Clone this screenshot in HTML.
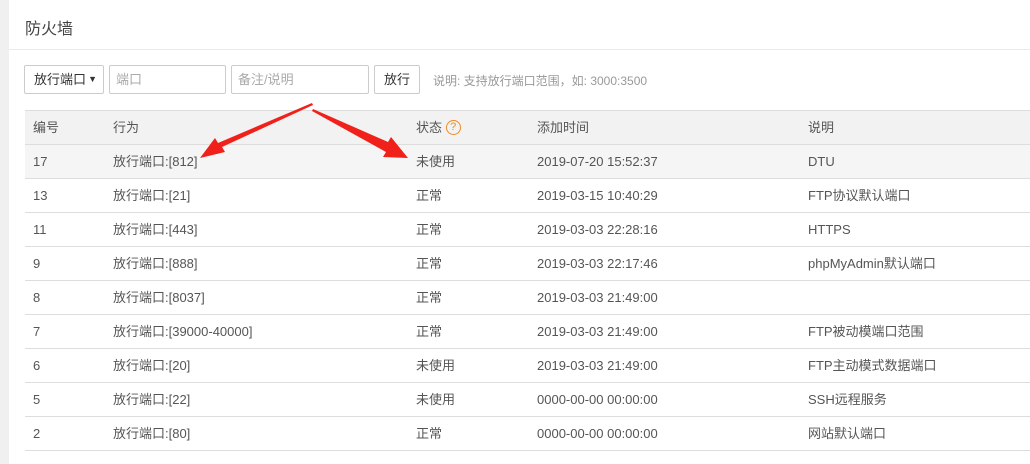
<!DOCTYPE html>
<html><head><meta charset="utf-8"><style>
body{margin:0;width:1030px;height:464px;overflow:hidden;background:#fff;font-family:"Liberation Sans","Noto Sans CJK SC",sans-serif;font-size:12px;color:#555;position:relative}
.strip{position:absolute;left:0;top:0;width:9px;height:464px;background:#f0f0f0}
.title{position:absolute;left:25px;top:15px;font-size:16px;color:#444}
.hl{position:absolute;left:9px;right:0;top:49px;height:1px;background:#eaeaea}
.box{position:absolute;top:65px;height:29px;border:1px solid #ccc;border-radius:2px;box-sizing:border-box;line-height:27px;font-size:13px}
.tbl{position:absolute;left:25px;top:110px;width:1010px;border-collapse:collapse}
.tbl td{vertical-align:baseline;line-height:17px;padding:8px 0 8px 8px;border-top:1px solid #ddd;color:#555;font-size:13px}
.tbl tr.h td{background:#f2f2f2}
.tbl tr.g td{background:#f5f5f5}
.tbl tr:last-child td{border-bottom:1px solid #ddd}
.q{display:inline-block;position:relative;top:1px;width:13px;height:13px;border:1.5px solid #f08a24;border-radius:50%;color:#f08a24;text-align:center;line-height:13px;font-size:11px;vertical-align:top}
</style></head><body>
<div class="strip"></div>
<div class="title">防火墙</div>
<div class="hl"></div>
<div class="box" style="left:24px;width:80px;padding-left:9px;color:#333">放行端口<span style="position:absolute;right:6px;font-size:9px">▼</span></div>
<div class="box" style="left:109px;width:117px;padding-left:6px;color:#aaa">端口</div>
<div class="box" style="left:231px;width:138px;padding-left:6px;color:#aaa">备注/说明</div>
<div class="box" style="left:374px;width:46px;text-align:center;color:#333">放行</div>
<div style="position:absolute;left:433px;top:72px;color:#999">说明: 支持放行端口范围，如: 3000:3500</div>
<table class="tbl">
<col style="width:80px"><col style="width:303px"><col style="width:121px"><col style="width:271px"><col>
<tr class="h"><td>编号</td><td>行为</td><td>状态 <span class="q">?</span></td><td>添加时间</td><td>说明</td></tr>
<tr class="g"><td>17</td><td>放行端口:[812]</td><td>未使用</td><td>2019-07-20 15:52:37</td><td>DTU</td></tr>
<tr><td>13</td><td>放行端口:[21]</td><td>正常</td><td>2019-03-15 10:40:29</td><td>FTP协议默认端口</td></tr>
<tr><td>11</td><td>放行端口:[443]</td><td>正常</td><td>2019-03-03 22:28:16</td><td>HTTPS</td></tr>
<tr><td>9</td><td>放行端口:[888]</td><td>正常</td><td>2019-03-03 22:17:46</td><td>phpMyAdmin默认端口</td></tr>
<tr><td>8</td><td>放行端口:[8037]</td><td>正常</td><td>2019-03-03 21:49:00</td><td>&nbsp;</td></tr>
<tr><td>7</td><td>放行端口:[39000-40000]</td><td>正常</td><td>2019-03-03 21:49:00</td><td>FTP被动模端口范围</td></tr>
<tr><td>6</td><td>放行端口:[20]</td><td>未使用</td><td>2019-03-03 21:49:00</td><td>FTP主动模式数据端口</td></tr>
<tr><td>5</td><td>放行端口:[22]</td><td>未使用</td><td>0000-00-00 00:00:00</td><td>SSH远程服务</td></tr>
<tr><td>2</td><td>放行端口:[80]</td><td>正常</td><td>0000-00-00 00:00:00</td><td>网站默认端口</td></tr>
</table>
<svg style="position:absolute;left:0;top:0" width="1030" height="464">
<polygon fill="#f0201a" points="312,103 313,105 222,147 225,152 200,158 215,138 218,143"/>
<polygon fill="#f0201a" points="312,111 313,109 388,142 391,137 408,158 383,157 386,152"/>
</svg>
</body></html>
